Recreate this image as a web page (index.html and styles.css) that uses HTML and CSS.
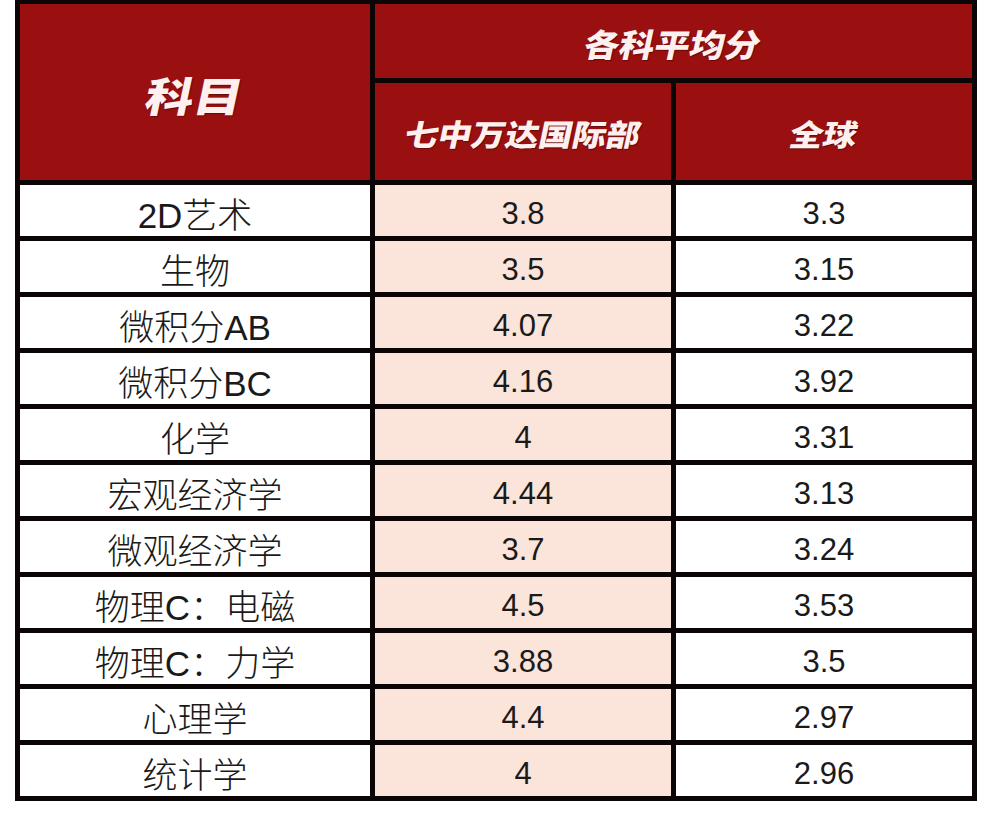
FILE: index.html
```html
<!DOCTYPE html>
<html lang="zh-CN">
<head>
<meta charset="utf-8">
<title>各科平均分</title>
<link rel="stylesheet" href="styles.css">
</head>
<body>
<div class="table">
  <div class="head subject"><span class="ht ht-big">科目</span></div>
  <div class="head group"><span class="ht ht-mid">各科平均分</span></div>
  <div class="head"><span class="ht ht-sub">七中万达国际部</span></div>
  <div class="head"><span class="ht ht-sub">全球</span></div>

  <div class="cell name">2D艺术</div><div class="cell pink">3.8</div><div class="cell">3.3</div>
  <div class="cell name">生物</div><div class="cell pink">3.5</div><div class="cell">3.15</div>
  <div class="cell name">微积分AB</div><div class="cell pink">4.07</div><div class="cell">3.22</div>
  <div class="cell name">微积分BC</div><div class="cell pink">4.16</div><div class="cell">3.92</div>
  <div class="cell name">化学</div><div class="cell pink">4</div><div class="cell">3.31</div>
  <div class="cell name">宏观经济学</div><div class="cell pink">4.44</div><div class="cell">3.13</div>
  <div class="cell name">微观经济学</div><div class="cell pink">3.7</div><div class="cell">3.24</div>
  <div class="cell name">物理C：电磁</div><div class="cell pink">4.5</div><div class="cell">3.53</div>
  <div class="cell name">物理C：力学</div><div class="cell pink">3.88</div><div class="cell">3.5</div>
  <div class="cell name">心理学</div><div class="cell pink">4.4</div><div class="cell">2.97</div>
  <div class="cell name">统计学</div><div class="cell pink">4</div><div class="cell">2.96</div>
</div>
</body>
</html>
```

FILE: styles.css
```css
html, body {
  margin: 0;
  padding: 0;
  background: #ffffff;
}

.table {
  margin-left: 15px;
  width: 962px;
  box-sizing: border-box;
  display: grid;
  grid-template-columns: 350px 296px 296px;
  grid-template-rows: 74px 97px repeat(11, 51px);
  gap: 5px;
  padding: 4px 5px 5px 5px;
  background: #0c0505;
}

.head {
  background: #9a1010;
  display: flex;
  align-items: center;
  justify-content: center;
  padding-top: 3px;
  box-sizing: border-box;
}

.subject {
  grid-row: 1 / span 2;
}

.group {
  grid-column: 2 / span 2;
}

.ht {
  display: inline-block;
  color: #fdf0ee;
  font-family: "Noto Sans CJK SC", "Noto Sans", sans-serif;
  font-weight: 900;
  white-space: nowrap;
  text-shadow: 1px 1px 1px rgba(40, 0, 0, 0.45);
}

.ht-big {
  font-size: 41px;
  transform: skewX(-12deg) scaleX(1.18);
}

.ht-mid {
  font-size: 32px;
  transform: skewX(-12deg) scaleX(1.1);
}

.ht-sub {
  font-size: 30px;
  transform: skewX(-12deg) scaleX(1.12);
}

.cell {
  background: #ffffff;
  color: #1a1a1a;
  font-family: "Liberation Sans", "Noto Sans CJK SC", sans-serif;
  font-weight: 300;
  font-size: 31px;
  display: flex;
  align-items: center;
  justify-content: center;
  padding-top: 7px;
  box-sizing: border-box;
  white-space: nowrap;
}

.name {
  font-size: 35px;
  padding-top: 4px;
}

.pink {
  background: #fbe4da;
}
```
